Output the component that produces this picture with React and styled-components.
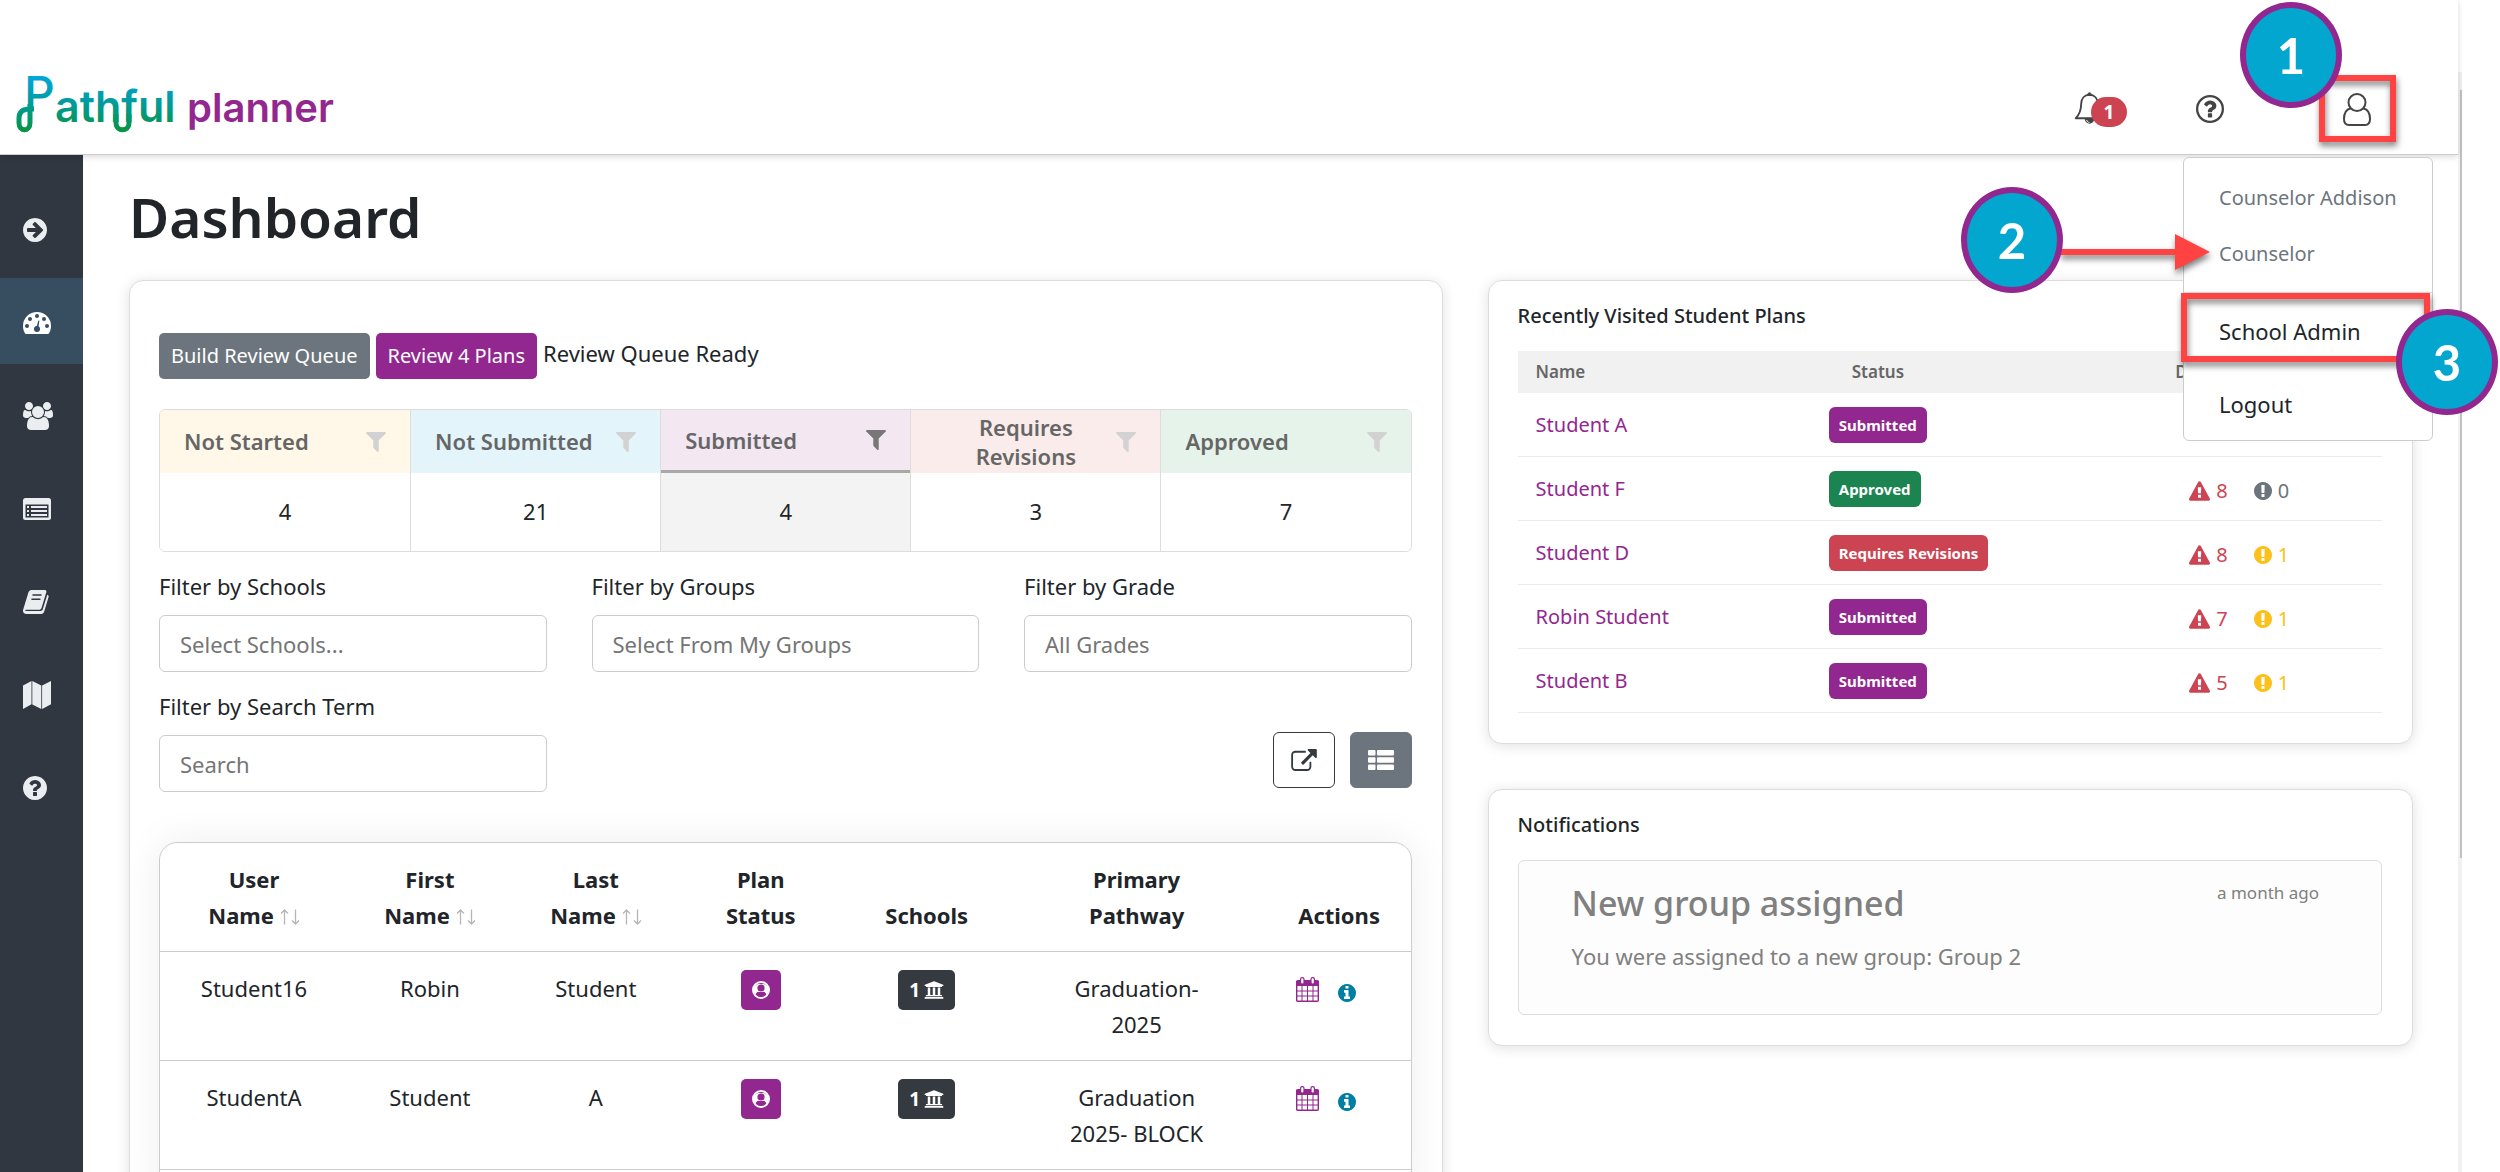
import React from 'react';
import styled, { createGlobalStyle, css } from 'styled-components';
import { FaUniversity } from 'react-icons/fa';

const colors = {
  purple: '#92278f',
  blue: '#02a6cf',
  slate: '#6c757d',
  dark: '#343a40',
  text: '#212529',
  red: '#cc4452',
  green: '#1c8450',
  yellow: '#fbc01b',
  callout: '#ff4242',
};

const GlobalStyle = createGlobalStyle`
  *,
  *::before,
  *::after {
    box-sizing: border-box;
  }
  body {
    margin: 0;
    background: #fff;
    color: ${colors.text};
    font-family: 'Noto Sans', 'Open Sans', sans-serif;
    font-size: 22px;
    line-height: 36px;
  }
  button,
  input {
    font: inherit;
  }
  button {
    cursor: pointer;
  }
`;

/* ---------- icons ---------- */

const ICONS = {
  arrowCircle:
    'M1413 896q0-27-18-45l-91-91-362-362q-18-18-45-18t-45 18l-91 91q-18 18-18 45t18 45l189 189h-502q-26 0-45 19t-19 45v128q0 26 19 45t45 19h502l-189 189q-19 19-19 45t19 45l91 91q18 18 45 18t45-18l362-362 91-91q18-18 18-45zm251 0q0 209-103 385.5t-279.5 279.5-385.5 103-385.5-103-279.5-279.5-103-385.5 103-385.5 279.5-279.5 385.5-103 385.5 103 279.5 279.5 103 385.5z',
  question:
    'M1024 1376v-192q0-14-9-23t-23-9h-192q-14 0-23 9t-9 23v192q0 14 9 23t23 9h192q14 0 23-9t9-23zm256-672q0-88-55.5-163t-138.5-116-170-41q-243 0-371 213-15 24 8 42l132 100q7 6 19 6 16 0 25-12 53-68 86-92 34-24 86-24 48 0 85.5 26t37.5 59q0 38-20 61t-68 45q-63 28-115.5 86.5t-52.5 125.5v36q0 14 9 23t23 9h192q14 0 23-9t9-23q0-19 21.5-49.5t54.5-49.5q32-18 49-28.5t46-35 44.5-48 28-60.5 12.5-81z',
  disc:
    'M1664 896q0 209-103 385.5t-279.5 279.5-385.5 103-385.5-103-279.5-279.5-103-385.5 103-385.5 279.5-279.5 385.5-103 385.5 103 279.5 279.5 103 385.5z',
  users:
    'M593 896q-162 5-265 128h-134q-82 0-138-40.5t-56-118.5q0-353 124-353 6 0 43.5 21t97.5 42.5 119 21.5q67 0 133-23-5 37-5 66 0 139 81 256zm1071 637q0 120-73 189.5t-194 69.5h-874q-121 0-194-69.5t-73-189.5q0-53 3.5-103.5t14-109 26.5-108.5 43-97.5 62-81 85.5-53.5 111.5-20q10 0 43 21.5t73 48 107 48 135 21.5 135-21.5 107-48 73-48 43-21.5q61 0 111.5 20t85.5 53.5 62 81 43 97.5 26.5 108.5 14 109 3.5 103.5zm-1024-1277q0 106-75 181t-181 75-181-75-75-181 75-181 181-75 181 75 75 181zm704 384q0 159-112.5 271.5t-271.5 112.5-271.5-112.5-112.5-271.5 112.5-271.5 271.5-112.5 271.5 112.5 112.5 271.5zm576 225q0 78-56 118.5t-138 40.5h-134q-103-123-265-128 81-117 81-256 0-29-5-66 66 23 133 23 59 0 119-21.5t97.5-42.5 43.5-21q124 0 124 353zm-128-609q0 106-75 181t-181 75-181-75-75-181 75-181 181-75 181 75 75 181z',
  warning:
    'M1024 1375v-190q0-14-9.5-23.5t-22.5-9.5h-192q-13 0-22.5 9.5t-9.5 23.5v190q0 14 9.5 23.5t22.5 9.5h192q13 0 22.5-9.5t9.5-23.5zm-2-374l18-459q0-12-10-19-13-11-24-11h-220q-11 0-24 11-10 7-10 21l17 457q0 10 10 16.5t24 6.5h185q14 0 23.5-6.5t10.5-16.5zm-14-934l768 1408q35 63-2 126-17 29-46.5 46t-63.5 17h-1536q-34 0-63.5-17t-46.5-46q-37-63-2-126l768-1408q17-31 47-49t65-18 65 18 47 49z',
  exclamation:
    'M896 128q209 0 385.5 103t279.5 279.5 103 385.5-103 385.5-279.5 279.5-385.5 103-385.5-103-279.5-279.5-103-385.5 103-385.5 279.5-279.5 385.5-103zm128 1247v-190q0-14-9-23.5t-22-9.5h-192q-13 0-23 10t-10 23v190q0 13 10 23t23 10h192q13 0 22-9.5t9-23.5zm-2-344l18-621q0-12-10-18-10-8-24-8h-220q-14 0-24 8-10 6-10 18l17 621q0 10 10 17.5t24 7.5h185q14 0 23.5-7.5t10.5-17.5z',
  info:
    'M1152 1376v-160q0-14-9-23t-23-9h-96v-512q0-14-9-23t-23-9h-320q-14 0-23 9t-9 23v160q0 14 9 23t23 9h96v320h-96q-14 0-23 9t-9 23v160q0 14 9 23t23 9h448q14 0 23-9t9-23zm-128-896v-160q0-14-9-23t-23-9h-192q-14 0-23 9t-9 23v160q0 14 9 23t23 9h192q14 0 23-9t9-23zm640 416q0 209-103 385.5t-279.5 279.5-385.5 103-385.5-103-279.5-279.5-103-385.5 103-385.5 279.5-279.5 385.5-103 385.5 103 279.5 279.5 103 385.5z',
  filter:
    'M1595 295q17 41-14 70l-493 493v742q0 42-39 59-13 5-25 5-27 0-45-19l-256-256q-19-19-19-45v-486l-493-493q-31-29-14-70 17-39 59-39h1280q42 0 59 39z',
  external:
    'M1408 928v320q0 119-84.5 203.5t-203.5 84.5h-832q-119 0-203.5-84.5t-84.5-203.5v-832q0-119 84.5-203.5t203.5-84.5h704q14 0 23 9t9 23v64q0 14-9 23t-23 9h-704q-66 0-113 47t-47 113v832q0 66 47 113t113 47h832q66 0 113-47t47-113v-320q0-14 9-23t23-9h64q14 0 23 9t9 23zm384-864v512q0 26-19 45t-45 19-45-19l-176-176-652 652q-10 10-23 10t-23-10l-114-114q-10-10-10-23t10-23l652-652-176-176q-19-19-19-45t19-45 45-19h512q26 0 45 19t19 45z',
};

const Glyph = ({ name, box = '128 128 1536 1536', width, height = width }) => (
  <svg width={width} height={height} viewBox={box} fill="currentColor" aria-hidden="true">
    <path d={ICONS[name]} />
  </svg>
);

const QuestionCircle = () => (
  <svg width="24" height="24" viewBox="128 128 1536 1536" aria-hidden="true">
    <path d={`${ICONS.disc}${ICONS.question}`} fill="currentColor" fillRule="evenodd" />
  </svg>
);

const QuestionCircleOutline = () => (
  <svg width="28" height="28" viewBox="128 128 1536 1536" aria-hidden="true">
    <circle cx="896" cy="896" r="705" fill="none" stroke="currentColor" strokeWidth="126" />
    <path
      d={ICONS.question}
      fill="currentColor"
      transform="translate(80 80) scale(0.91)"
    />
  </svg>
);

const Gauge = () => (
  <svg width="28" height="22" viewBox="0 0 28 22" aria-hidden="true">
    <path d="M14 0a14 14 0 0 0-14 14c0 3 .8 5 1.8 7 .3.6.7 1 1.4 1h21.6c.7 0 1.1-.4 1.4-1 1-2 1.8-4 1.8-7A14 14 0 0 0 14 0z" fill="currentColor" />
    <g fill="#374e60">
      <circle cx="4" cy="14" r="2" />
      <circle cx="7" cy="7" r="2" />
      <circle cx="14" cy="4" r="2" />
      <circle cx="21" cy="7" r="2" />
      <circle cx="24" cy="14" r="2" />
      <circle cx="14" cy="17" r="3" />
      <path d="M13.2 16 15.4 8.500l1 .3L15.2 17z" />
    </g>
  </svg>
);

const ListCard = () => (
  <svg width="28" height="22" viewBox="0 0 28 22" aria-hidden="true">
    <rect width="28" height="22" rx="2.5" fill="currentColor" />
    <rect x="2.5" y="6.5" width="23" height="13" fill="#313740" />
    <g fill="currentColor">
      <path d="M4 8h2v2H4zM4 12h2v2H4zM4 16h2v2H4zM8 8h16v2H8zM8 12h16v2H8zM8 16h16v2H8z" />
    </g>
  </svg>
);

const Book = () => (
  <svg width="26" height="24" viewBox="0 0 26 24" aria-hidden="true">
    <path
      d="M8.500 0h13c1.500 0 2.200 1 1.800 2.300L18.500 18c-.4 1.200-1.300 1.800-2.600 1.800H3.400c-1.300 0-1.500 1.200-.6 1.200h14.700c1.200 0 1.900-.5 2.300-1.700L24.300 4.700c1.200.4 1.600 1.400 1.200 2.600L21.200 21.600c-.4 1.500-1.500 2.400-3 2.400H3.500C1 24-.6 21.800.2 19.500L5.400 2.500C5.900 1 7 0 8.500 0z"
      fill="currentColor"
    />
    <path d="M9.500 5h9M8.400 9.200h9" stroke="#313740" strokeWidth="1.5" />
  </svg>
);

const MapIcon = () => (
  <svg width="28" height="28" viewBox="0 0 28 28" fill="currentColor" aria-hidden="true">
    <path d="M0 4.500 8.500 0v23.300L0 28zM9.300 0 18.300 4.600V28L9.300 23.400zM19.100 4.600 28 0v23.300L19.100 28z" />
  </svg>
);

const Bell = () => (
  <svg width="31" height="34" viewBox="0 0 31 34" fill="none" aria-hidden="true">
    <path
      d="M15.500 2.800c-5 .2-8.200 3.700-8.300 8.800-.1 7-1.900 11.400-5.500 14.600h27.600c-3.600-3.200-5.400-7.600-5.500-14.600-.1-5.100-3.300-8.600-8.300-8.800z"
      stroke="currentColor"
      strokeWidth="1.9"
      strokeLinejoin="round"
    />
    <path d="M13.800 2.500a1.700 1.700 0 0 1 3.400 0z" fill="currentColor" stroke="currentColor" />
    <path d="M10.800 27h9.400a4.700 4.700 0 0 1-9.400 0z" fill="currentColor" />
    <path d="M12.700 28c.2 1.500 1.200 2.400 2.700 2.500" stroke="#fff" />
  </svg>
);

const Person = () => (
  <svg width="28" height="33" viewBox="0 0 28 33" fill="none" aria-hidden="true">
    <g stroke="currentColor" strokeWidth="2">
      <circle cx="14" cy="9.5" r="8.5" />
      <path d="M7.500 15.500C3.200 16.500 1 20.500 1 26c0 3.700 1.800 6 5 6h16c3.200 0 5-2.300 5-6 0-5.500-2.200-9.500-6.500-10.500" />
    </g>
  </svg>
);

const PersonCircle = () => (
  <svg width="18" height="18" viewBox="0 0 18 18" fill="none" aria-hidden="true">
    <circle cx="9" cy="9" r="8" stroke="#fff" strokeWidth="2" />
    <path d="M2 5.500 6 3h6l4 2.500v6L14.500 14c-.7-2-2-3-3.300-3H6.800c-1.300 0-2.600 1-3.300 3L2 11.500z" fill="#fff" />
    <circle cx="9" cy="7" r="3.6" fill={colors.purple} />
    <path d="M4 13.300c.4-1.700 1.400-2.600 2.600-2.600.8.700 1.500 1 2.400 1s1.600-.3 2.400-1c1.200 0 2.200.9 2.600 2.600C12.600 15 11 15.900 9 15.900S5.400 15 4 13.300z" fill={colors.purple} />
  </svg>
);

const Calendar = () => (
  <svg width="23" height="25" viewBox="0 0 23 25" fill="none" aria-hidden="true">
    <rect x=".7" y="3.7" width="21.6" height="20.6" rx="1" stroke="currentColor" strokeWidth="1.4" />
    <path d="M0 4h23v5H0z" fill="currentColor" />
    <path d="M6 9v15M11.500 9v15M17 9v15M1 14h21M1 19h21" stroke="currentColor" />
    <rect x="4.6" y=".7" width="3.4" height="6.4" rx="1.5" fill="#fff" stroke="currentColor" strokeWidth="1.2" />
    <rect x="15" y=".7" width="3.4" height="6.4" rx="1.5" fill="#fff" stroke="currentColor" strokeWidth="1.2" />
  </svg>
);

const ListSquares = () => (
  <svg width="26" height="20" viewBox="0 0 26 20" fill="currentColor" aria-hidden="true">
    <rect width="7.5" height="5.6" rx="1" />
    <rect x="9" width="17" height="5.6" rx="1" />
    <rect y="7.2" width="7.5" height="5.6" rx="1" />
    <rect x="9" y="7.2" width="17" height="5.6" rx="1" />
    <rect y="14.4" width="7.5" height="5.6" rx="1" />
    <rect x="9" y="14.4" width="17" height="5.6" rx="1" />
  </svg>
);

const SortIcon = styled.svg`
  vertical-align: -1px;
`;

const SortArrows = () => (
  <SortIcon width="20" height="16" viewBox="0 0 20 16" fill="none" stroke="#b5b5b5" aria-hidden="true">
    <path d="M4.500 15.500V1M1 4.500l3.500-3.500L8 4.500" strokeWidth="1.3" />
    <path d="M15.500.5V15M12 11.500l3.500 3.500 3.500-3.500" strokeWidth="1.3" />
  </SortIcon>
);

const Logo = () => (
  <svg width="330" height="90" viewBox="0 -10 330 90" role="img" aria-label="Pathful planner">
    <defs>
      <linearGradient id="logoFade" gradientUnits="userSpaceOnUse" x1="0" y1="2" x2="0" y2="58">
        <stop offset="0" stopColor="#00a8dc" />
        <stop offset=".45" stopColor="#009c9f" />
        <stop offset="1" stopColor="#079442" />
      </linearGradient>
    </defs>
    <g fill="url(#logoFade)" fontFamily="Inter, sans-serif">
      <text x="10" y="37" fontSize="48" fontWeight="500">P</text>
      <text x="41" y="48" fontSize="43" fontWeight="600">athful</text>
    </g>
    <g stroke="url(#logoFade)" strokeWidth="5" fill="none">
      <path d="M16 30v19c0 9-11 9-11 0v-5c0-6 4-9 10-9h5" />
      <path d="M102 40v9c0 9 13 9 13 0v-9" />
    </g>
    <text x="173" y="48" fontSize="40" fontWeight="600" fontFamily="Inter, sans-serif" fill={colors.purple}>
      planner
    </text>
  </svg>
);

/* ---------- shell ---------- */

const Page = styled.div`
  position: relative;
  display: grid;
  grid-template-columns: minmax(0, 1fr) 4px;
  height: 100vh;
  padding-right: 38px;
  overflow: hidden;
`;

const Shell = styled.div`
  display: flex;
  flex-direction: column;
  min-width: 0;
  min-height: 0;
`;

const ScrollTrack = styled.div`
  margin-top: 72px;
  padding: 18px 0 0 2px;
  background: #f1f1f1;
`;

const ScrollThumb = styled.div`
  height: 71%;
  background: #c1c1c1;
`;

const Header = styled.header`
  position: relative;
  z-index: 2;
  display: flex;
  align-items: center;
  justify-content: space-between;
  flex: none;
  height: 155px;
  padding: 64px 62px 0 14px;
  background: #fff;
  border-bottom: 1px solid #ccc;
  box-shadow: 0 2px 6px rgba(0, 0, 0, 0.15);
`;

const HeaderTools = styled.div`
  display: flex;
  align-items: center;
  gap: 69px;
`;

const IconButton = styled.button`
  position: relative;
  display: flex;
  padding: 0;
  border: 0;
  background: none;
  color: #444;
`;

const HelpButton = styled(IconButton)`
  margin: 0 25px 0 22px;
`;

const AlertCount = styled.span`
  position: absolute;
  top: 5px;
  left: 17px;
  width: 36px;
  height: 30px;
  border-radius: 15px;
  background: ${colors.red};
  color: #fff;
  font-size: 19px;
  font-weight: 700;
  line-height: 30px;
  text-align: center;
`;

const UserArea = styled.div`
  position: relative;
  padding: 18px 25px;
`;

const Menu = styled.ul`
  position: absolute;
  top: 82px;
  right: -37px;
  width: 250px;
  margin: 0;
  padding: 12px 0 8px;
  border: 1px solid #ccc;
  border-radius: 6px;
  background: #fff;
  list-style: none;
  white-space: nowrap;
`;

const MenuItem = styled.li`
  padding: 10px 35px;
  color: ${colors.text};

  ${({ $muted }) =>
    $muted &&
    css`
      color: ${colors.slate};
      font-size: 20px;
    `}

  ${({ $divided }) =>
    $divided &&
    css`
      margin: 10px 0 17px;
      padding-top: 20px;
      border-top: 1px solid #ddd;
    `}
`;

const MenuLink = styled.a`
  color: inherit;
  text-decoration: none;
`;

const Body = styled.div`
  display: flex;
  flex: 1;
  min-height: 0;
`;

const Sidebar = styled.nav`
  display: flex;
  flex-direction: column;
  flex: none;
  gap: 7px;
  width: 83px;
  padding-top: 30px;
  background: #313740;
`;

const SidebarLink = styled.a`
  display: flex;
  align-items: center;
  height: 86px;
  padding: 3px 0 0 23px;
  background: ${({ $active }) => ($active ? '#374e60' : 'transparent')};
  color: ${({ $active }) => ($active ? '#fff' : '#ebeef1')};
`;

const Main = styled.main`
  flex: 1;
  min-width: 0;
  padding: 26px 45px 0 46px;
`;

const Title = styled.h1`
  margin: 0 0 27px;
  font-size: 55px;
  font-weight: 600;
  line-height: 72px;
`;

const Columns = styled.div`
  display: grid;
  grid-template-columns: minmax(0, 1313fr) minmax(0, 925fr);
  align-items: start;
  gap: 45px;
`;

const SideColumn = styled.div`
  display: grid;
  gap: 45px;
`;

const Card = styled.section`
  padding: ${({ $top }) => $top || 17}px 30px 30px 29px;
  border: 1px solid #ddd;
  border-radius: 14px;
  background: #fff;
  box-shadow: 0 2px 14px rgba(0, 0, 0, 0.12);
`;

/* ---------- review card ---------- */

const QueueBar = styled.div`
  display: flex;
  align-items: flex-start;
  gap: 6px;
  margin-bottom: 30px;
`;

const QueueButton = styled.button`
  height: 46px;
  padding: 0 12px;
  border: 0;
  border-radius: 5px;
  background: ${({ $primary }) => ($primary ? colors.purple : colors.slate)};
  color: #fff;
  font-size: 20px;
`;

const QueueNote = styled.span`
  padding-top: 2px;
`;

const StatusTable = styled.table`
  width: 100%;
  margin-bottom: 16px;
  border: 1px solid #ddd;
  border-radius: 6px;
  border-spacing: 0;
  overflow: hidden;
  table-layout: fixed;
  text-align: center;

  th,
  td {
    padding: 0;
  }
  th + th,
  td + td {
    border-left: 1px solid #ddd;
  }
`;

const StatusHead = styled.th`
  background: ${({ $tint }) => $tint};
`;

const StatusFilter = styled.button`
  display: flex;
  align-items: center;
  justify-content: space-between;
  width: 100%;
  height: 63px;
  padding: 0 24px;
  border: 0;
  border-bottom: ${({ $active }) => ($active ? '3px solid #a8a8a8' : '0')};
  background: none;
  color: #666;
  font-weight: 600;
  line-height: 29px;

  svg {
    flex: none;
    color: ${({ $active }) => ($active ? '#777' : '#d2d2d2')};
  }
  span {
    flex: ${({ $wrap }) => ($wrap ? 1 : 'none')};
    padding: ${({ $wrap }) => ($wrap ? '0 16px' : 0)};
  }
`;

const StatusCount = styled.td`
  height: 78px;
  background: ${({ $active }) => ($active ? '#f3f3f3' : '#fff')};

  && {
    padding-bottom: 3px;
  }
`;

const Filters = styled.div`
  display: grid;
  grid-template-columns: repeat(3, minmax(0, 1fr));
  align-items: end;
  gap: 16px 45px;
  margin-bottom: 50px;
`;

const Field = styled.label`
  display: grid;
  gap: 11px;
`;

const TextBox = styled.input`
  width: 100%;
  height: 57px;
  padding: 0 20px;
  border: 1px solid #ccc;
  border-radius: 6px;
  background: #fff;

  &::placeholder {
    color: #757575;
    opacity: 1;
  }
`;

const ViewButtons = styled.div`
  grid-column: 3;
  display: flex;
  justify-content: flex-end;
  gap: 15px;
  padding-bottom: 4px;
`;

const ViewButton = styled.button`
  display: flex;
  align-items: center;
  justify-content: center;
  width: 62px;
  height: 56px;
  padding: 0;
  border: 1px solid ${({ $active }) => ($active ? colors.slate : colors.dark)};
  border-radius: 6px;
  background: ${({ $active }) => ($active ? colors.slate : '#fff')};
  color: ${({ $active }) => ($active ? '#fff' : colors.dark)};
`;

const StudentPanel = styled.div`
  padding-bottom: 30px;
  border: 1px solid #ccc;
  border-radius: 18px;
  box-shadow: 0 0 40px rgba(0, 0, 0, 0.07);
`;

const StudentTable = styled.table`
  width: 100%;
  border-spacing: 0;
  table-layout: fixed;
  text-align: center;

  th,
  td {
    padding: 18px 20px;
    border-bottom: 1px solid #ccc;
    vertical-align: top;
  }
  th {
    padding: 18px 10px;
    font-weight: 700;
    vertical-align: bottom;
  }
  th:last-child {
    padding-left: 16px;
  }
`;

const IconBadge = styled.span`
  display: inline-flex;
  align-items: center;
  justify-content: center;
  gap: 4px;
  height: 40px;
  padding: 0 11px;
  border-radius: 5px;
  background: ${({ $dark }) => ($dark ? colors.dark : colors.purple)};
  color: #fff;
  font-size: 19px;
  font-weight: 700;
  vertical-align: top;
`;

const Actions = styled.div`
  display: flex;
  align-items: flex-end;
  justify-content: center;
  gap: 19px;
  padding: 7px 20px 0 0;
`;

const ActionButton = styled(IconButton)`
  color: ${({ $info }) => ($info ? '#007ea3' : colors.purple)};
`;

/* ---------- side cards ---------- */

const CardTitle = styled.h2`
  margin: 0 0 17px;
  font-size: 20px;
  font-weight: 500;
`;

const PlansTable = styled.table`
  width: 100%;
  border-spacing: 0;
  table-layout: fixed;
  font-size: 20px;
  text-align: left;

  th {
    height: 42px;
    padding: 0 18px;
    background: #f1f1f1;
    color: #666;
    font-size: 17px;
    font-weight: 600;
  }
  th:nth-child(2) {
    padding-left: 23px;
  }
  td {
    height: 64px;
    padding: 0;
    border-bottom: 1px solid #eaeaea;
  }
  td:first-child {
    padding-left: 18px;
  }
  td:last-child {
    padding-left: 32px;
  }
`;

const StudentLink = styled.a`
  color: ${colors.purple};
  text-decoration: none;
`;

const StatusBadge = styled.span`
  display: inline-block;
  padding: 0 10px;
  border-radius: 6px;
  background: ${({ $color }) => $color};
  color: #fff;
  font-size: 15px;
  font-weight: 700;
  line-height: 36px;
  vertical-align: middle;
`;

const Counts = styled.div`
  display: flex;
  gap: 26px;
  padding-top: 4px;
`;

const Count = styled.span`
  display: flex;
  align-items: center;
  gap: 6px;
  color: ${({ $color }) => $color};
`;

const Notice = styled.article`
  min-height: 154px;
  padding: 20px 62px 40px 53px;
  border: 1px solid #ddd;
  border-radius: 6px;
  background: #fdfdfd;
  color: #808080;
`;

const NoticeHead = styled.div`
  display: flex;
  justify-content: space-between;
  margin-bottom: 13px;
`;

const NoticeTitle = styled.h3`
  margin: 0;
  font-size: 34px;
  font-weight: 500;
  line-height: 44px;
`;

const NoticeTime = styled.time`
  font-size: 17px;
  line-height: 24px;
`;

const NoticeText = styled.p`
  margin: 0;
`;

/* ---------- walkthrough markers laid over the page ---------- */

const Step = styled.div`
  position: absolute;
  z-index: 5;
  top: ${({ $top }) => $top}px;
  right: ${({ $right }) => $right}px;
  display: flex;
  align-items: center;
  justify-content: center;
  width: 102px;
  height: 106px;
  border: 6px solid ${colors.purple};
  border-radius: 50%;
  background: ${colors.blue};
  color: #fff;
  font-family: Lato, sans-serif;
  font-size: 49px;
  font-weight: 700;
`;

const Outline = styled.div`
  position: absolute;
  z-index: 4;
  top: ${({ $top }) => $top}px;
  right: ${({ $right }) => $right}px;
  width: ${({ $width }) => $width}px;
  height: ${({ $height }) => $height}px;
  border: 6px solid ${colors.callout};
  filter: drop-shadow(1px 4px 3px rgba(0, 0, 0, 0.5));
  pointer-events: none;
`;

const Arrow = styled.svg`
  position: absolute;
  z-index: 4;
  top: 234px;
  right: 290px;
  overflow: visible;
  filter: drop-shadow(1px 4px 3px rgba(0, 0, 0, 0.5));
`;

const navItems = [
  { label: 'Expand', icon: <Glyph name="arrowCircle" width={24} /> },
  { label: 'Dashboard', icon: <Gauge />, active: true },
  { label: 'Students', icon: <Glyph name="users" box="0 0 1920 1792" width={30} height={28} /> },
  { label: 'Plans', icon: <ListCard /> },
  { label: 'Courses', icon: <Book /> },
  { label: 'Pathways', icon: <MapIcon /> },
  { label: 'Help', icon: <QuestionCircle /> },
];

const statuses = [
  { label: 'Not Started', count: 4, tint: '#fff8e8' },
  { label: 'Not Submitted', count: 21, tint: '#e3f5fa' },
  { label: 'Submitted', count: 4, tint: '#f3e7f2', active: true },
  { label: 'Requires Revisions', count: 3, tint: '#faeceb', wrap: true },
  { label: 'Approved', count: 7, tint: '#e6f3ea' },
];

// shares of the table width
const columns = [
  { label: 'User Name', share: 188, sortable: true },
  { label: 'First Name', share: 164, sortable: true },
  { label: 'Last Name', share: 168, sortable: true },
  { label: 'Plan Status', share: 162 },
  { label: 'Schools', share: 170 },
  { label: 'Primary Pathway', share: 250 },
  { label: 'Actions', share: 149 },
];

const totalShare = columns.reduce((sum, { share }) => sum + share, 0);

const students = [
  { user: 'Student16', first: 'Robin', last: 'Student', pathway: ['Graduation-', '2025'] },
  { user: 'StudentA', first: 'Student', last: 'A', pathway: ['Graduation', '2025- BLOCK'] },
];

const badgeColors = {
  Submitted: colors.purple,
  Approved: colors.green,
  'Requires Revisions': colors.red,
};

const plans = [
  { name: 'Student A', status: 'Submitted' },
  { name: 'Student F', status: 'Approved', errors: 8, warnings: 0 },
  { name: 'Student D', status: 'Requires Revisions', errors: 8, warnings: 1 },
  { name: 'Robin Student', status: 'Submitted', errors: 7, warnings: 1 },
  { name: 'Student B', status: 'Submitted', errors: 5, warnings: 1 },
];

const TopBar = () => (
  <Header>
    <Logo />
    <HeaderTools>
      <IconButton aria-label="Alerts">
        <Bell />
        <AlertCount>1</AlertCount>
      </IconButton>
      <HelpButton aria-label="Help">
        <QuestionCircleOutline />
      </HelpButton>
      <UserArea>
        <IconButton aria-label="Account">
          <Person />
        </IconButton>
        <Menu>
          <MenuItem $muted>Counselor Addison</MenuItem>
          <MenuItem $muted>Counselor</MenuItem>
          <MenuItem $divided>
            <MenuLink href="#admin">School Admin</MenuLink>
          </MenuItem>
          <MenuItem>
            <MenuLink href="#logout">Logout</MenuLink>
          </MenuItem>
        </Menu>
      </UserArea>
    </HeaderTools>
  </Header>
);

const ReviewCard = () => (
  <Card $top={52}>
    <QueueBar>
      <QueueButton>Build Review Queue</QueueButton>
      <QueueButton $primary>Review 4 Plans</QueueButton>
      <QueueNote>Review Queue Ready</QueueNote>
    </QueueBar>
    <StatusTable>
      <thead>
        <tr>
          {statuses.map(({ label, tint, active, wrap }) => (
            <StatusHead $tint={tint} key={label}>
              <StatusFilter $active={active} $wrap={wrap}>
                <span>{label}</span>
                <Glyph name="filter" box="190 256 1412 1410" width={20} />
              </StatusFilter>
            </StatusHead>
          ))}
        </tr>
      </thead>
      <tbody>
        <tr>
          {statuses.map(({ label, count, active }) => (
            <StatusCount $active={active} key={label}>
              {count}
            </StatusCount>
          ))}
        </tr>
      </tbody>
    </StatusTable>
    <Filters>
      <Field>
        Filter by Schools
        <TextBox placeholder="Select Schools..." />
      </Field>
      <Field>
        Filter by Groups
        <TextBox placeholder="Select From My Groups" />
      </Field>
      <Field>
        Filter by Grade
        <TextBox placeholder="All Grades" />
      </Field>
      <Field>
        Filter by Search Term
        <TextBox type="search" placeholder="Search" />
      </Field>
      <ViewButtons>
        <ViewButton aria-label="Export">
          <Glyph name="external" box="0 0 1792 1540" width={26} height={22} />
        </ViewButton>
        <ViewButton $active aria-label="List view">
          <ListSquares />
        </ViewButton>
      </ViewButtons>
    </Filters>
    <StudentPanel>
      <StudentTable>
        <colgroup>
          {columns.map(({ label, share }) => (
            <col key={label} style={{ width: `${(share / totalShare) * 100}%` }} />
          ))}
        </colgroup>
        <thead>
          <tr>
            {columns.map(({ label, sortable }) => {
              const [first, second] = label.split(' ');
              return (
                <th key={label}>
                  {first}
                  {second && <br />}
                  {second} {sortable && <SortArrows />}
                </th>
              );
            })}
          </tr>
        </thead>
        <tbody>
          {students.map(({ user, first, last, pathway }) => (
            <tr key={user}>
              <td>{user}</td>
              <td>{first}</td>
              <td>{last}</td>
              <td>
                <IconBadge>
                  <PersonCircle />
                </IconBadge>
              </td>
              <td>
                <IconBadge $dark>
                  1 <FaUniversity size={20} />
                </IconBadge>
              </td>
              <td>
                {pathway[0]}
                <br />
                {pathway[1]}
              </td>
              <td>
                <Actions>
                  <ActionButton aria-label="Schedule">
                    <Calendar />
                  </ActionButton>
                  <ActionButton $info aria-label="Details">
                    <Glyph name="info" width={18} />
                  </ActionButton>
                </Actions>
              </td>
            </tr>
          ))}
        </tbody>
      </StudentTable>
    </StudentPanel>
  </Card>
);

const PlansCard = () => (
  <Card>
    <CardTitle>Recently Visited Student Plans</CardTitle>
    <PlansTable>
      <colgroup>
        <col style={{ width: '36%' }} />
        <col style={{ width: '38%' }} />
        <col style={{ width: '26%' }} />
      </colgroup>
      <thead>
        <tr>
          <th>Name</th>
          <th>Status</th>
          <th>Details</th>
        </tr>
      </thead>
      <tbody>
        {plans.map(({ name, status, errors, warnings }) => (
          <tr key={name}>
            <td>
              <StudentLink href="#plan">{name}</StudentLink>
            </td>
            <td>
              <StatusBadge $color={badgeColors[status]}>{status}</StatusBadge>
            </td>
            <td>
              {errors !== undefined && (
                <Counts>
                  <Count $color={colors.red}>
                    <Glyph name="warning" box="0 0 1792 1664" width={21} height={20} />
                    {errors}
                  </Count>
                  <Count $color={warnings ? colors.yellow : colors.slate}>
                    <Glyph name="exclamation" width={18} />
                    {warnings}
                  </Count>
                </Counts>
              )}
            </td>
          </tr>
        ))}
      </tbody>
    </PlansTable>
  </Card>
);

const NotificationsCard = () => (
  <Card>
    <CardTitle>Notifications</CardTitle>
    <Notice>
      <NoticeHead>
        <NoticeTitle>New group assigned</NoticeTitle>
        <NoticeTime>a month ago</NoticeTime>
      </NoticeHead>
      <NoticeText>You were assigned to a new group: Group 2</NoticeText>
    </Notice>
  </Card>
);

const App = () => (
  <>
    <GlobalStyle />
    <Page>
      <Shell>
        <TopBar />
        <Body>
          <Sidebar>
            {navItems.map(({ label, icon, active }) => (
              <SidebarLink href="#nav" aria-label={label} $active={active} key={label}>
                {icon}
              </SidebarLink>
            ))}
          </Sidebar>
          <Main>
            <Title>Dashboard</Title>
            <Columns>
              <ReviewCard />
              <SideColumn>
                <PlansCard />
                <NotificationsCard />
              </SideColumn>
            </Columns>
          </Main>
        </Body>
      </Shell>
      <ScrollTrack>
        <ScrollThumb />
      </ScrollTrack>
      <Outline $top={75} $right={104} $width={77} $height={67} />
      <Outline $top={293} $right={70} $width={249} $height={69} />
      <Arrow width="150" height="36" viewBox="0 0 150 36" fill={colors.callout} aria-hidden="true">
        <path d="M0 15h115V0l35 18-35 18V21H0z" />
      </Arrow>
      <Step $top={2} $right={158}>1</Step>
      <Step $top={187} $right={437}>2</Step>
      <Step $top={309} $right={2}>3</Step>
    </Page>
  </>
);

export default App;
